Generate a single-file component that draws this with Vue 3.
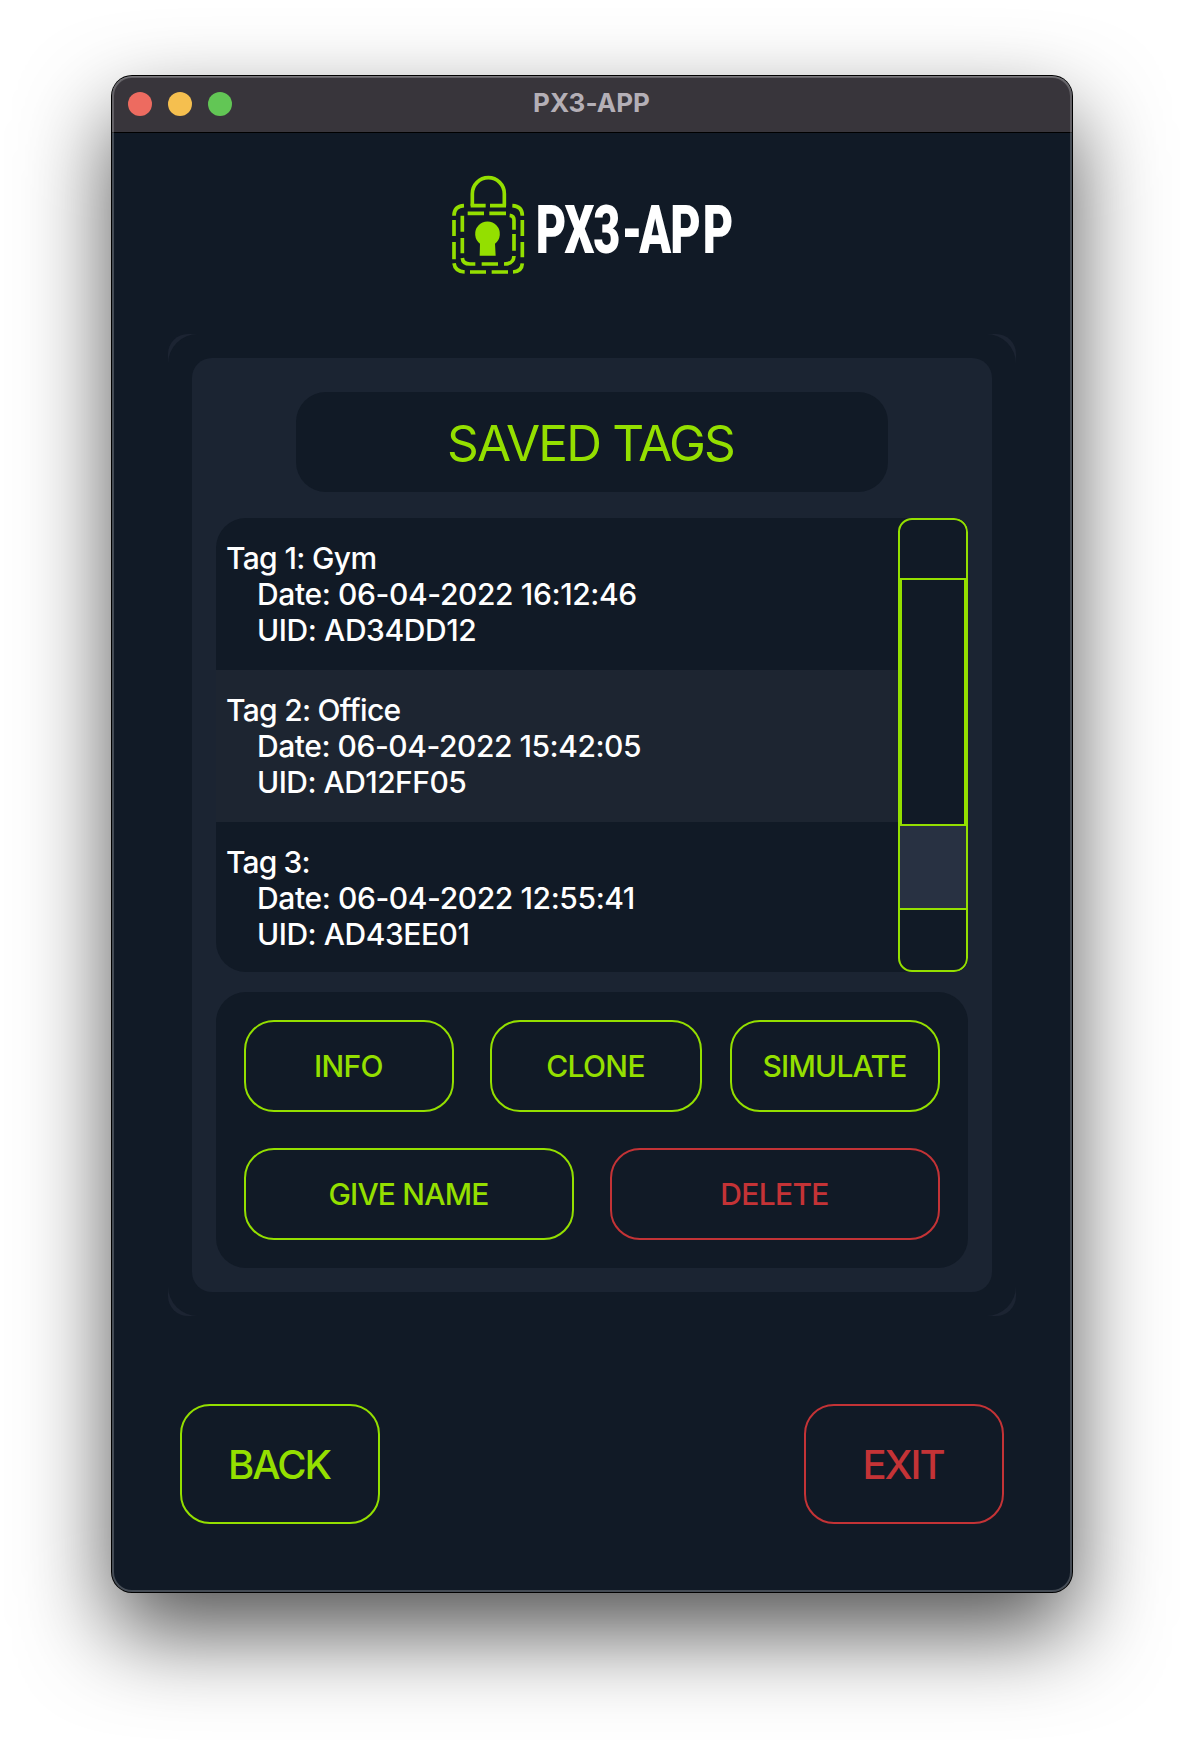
<script setup>
const tags = [
  {
    name: { text: 'Tag 1: Gym', track: -0.65 },
    date: { text: 'Date: 06-04-2022 16:12:46', track: -0.38 },
    uid: { text: 'UID: AD34DD12', track: -0.42 },
  },
  {
    name: { text: 'Tag 2: Office', track: -0.72 },
    date: { text: 'Date: 06-04-2022 15:42:05', track: -0.46 },
    uid: { text: 'UID: AD12FF05', track: -0.54 },
  },
  {
    name: { text: 'Tag 3:', track: -0.85 },
    date: { text: 'Date: 06-04-2022 12:55:41', track: -0.4 },
    uid: { text: 'UID: AD43EE01', track: -0.47 },
  },
]
const spacing = (line) => ({ letterSpacing: line.track + 'px' })
</script>

<template>
  <div class="desktop">
    <main class="window">
      <header class="titlebar">
        <div class="lights">
          <i class="light close"></i>
          <i class="light minimise"></i>
          <i class="light maximise"></i>
        </div>
        <span class="title">PX3-APP</span>
      </header>

      <section class="body">
        <svg class="logo" viewBox="0 0 960 390" width="320" height="130">
          <g fill="none" stroke="#94df00" stroke-width="11">
            <!-- shackle -->
            <path d="M127 137V101a48 48 0 0 1 96 0V137" />
            <!-- outer dashed body -->
            <path d="M122 137H167M180 137H228" />
            <path d="M72 167C72 148 83 138 102 137M247 137C266 138 277 148 277 167" />
            <path d="M72 180V228M72 246V298M277 180V228M277 246V292" />
            <path d="M72 310C74 326 84 335 104 336M249 336C266 335 276 326 277 310" />
            <path d="M120 336H168M185 336H234" />
            <!-- inner dashed body -->
            <path d="M113 160H162M178 160H228" />
            <path d="M97 167V215M97 234V280M239 166C248 167 252 171 252 180V209M252 222V272" />
            <path d="M97 294C98 306 106 312 120 312H136M155 312H204M222 312C242 312 251 305 252 288" />
          </g>
          <path fill="#94df00" d="M150 251A37 37 0 1 1 195 251L197 287H149Z" />
          <g transform="translate(0 278) scale(.7 1)">
            <text class="wordmark" y="0" x="453 576 700 821 897 1030 1169">PX3-APP</text>
          </g>
        </svg>

        <div class="frame">
          <div class="frame-mask">
            <div class="panel">
              <h1 class="heading"><span>SAVED TAGS</span></h1>

              <div class="list">
                <ul class="rows">
                  <li v-for="tag in tags" :key="tag.name.text" class="row">
                    <div :style="spacing(tag.name)">{{ tag.name.text }}</div>
                    <div class="detail" :style="spacing(tag.date)">{{ tag.date.text }}</div>
                    <div class="detail" :style="spacing(tag.uid)">{{ tag.uid.text }}</div>
                  </li>
                </ul>
                <div class="scrollbar">
                  <div class="step up"></div>
                  <div class="handle"></div>
                  <div class="track"></div>
                  <div class="step down"></div>
                </div>
              </div>

              <div class="actions">
                <div class="action-row">
                  <button class="btn info">INFO</button>
                  <button class="btn clone">CLONE</button>
                  <button class="btn simulate">SIMULATE</button>
                </div>
                <div class="action-row">
                  <button class="btn wide name">GIVE NAME</button>
                  <button class="btn wide danger">DELETE</button>
                </div>
              </div>
            </div>
          </div>
        </div>

        <footer class="footer">
          <button class="btn big">BACK</button>
          <button class="btn big danger">EXIT</button>
        </footer>
      </section>
    </main>
  </div>
</template>

<style>
body {
  background: #fff;
}
</style>

<style scoped>
* {
  box-sizing: border-box;
}
.desktop {
  width: 1184px;
  height: 1740px;
  padding: 76px 112px;
  overflow: hidden;
  font-family: Inter, 'Liberation Sans', sans-serif;
}
.window {
  position: relative;
  width: 960px;
  height: 1516px;
  border-radius: 20px;
  background: #111a26;
  box-shadow: 0 0 0 1px #000, 0 40px 90px rgba(0, 0, 0, 0.68);
}
.window::after {
  content: '';
  position: absolute;
  inset: 0;
  border-radius: 20px;
  box-shadow: inset 0 1px 0 rgba(255, 255, 255, 0.15), inset 0 0 0 2px rgba(255, 255, 255, 0.22);
  pointer-events: none;
}
.titlebar {
  display: grid;
  grid-template-columns: 1fr auto 1fr;
  align-items: center;
  height: 57px;
  padding-left: 16px;
  border-bottom: 1px solid #000;
  border-radius: 20px 20px 0 0;
  background: #38353b;
}
.lights {
  display: flex;
  gap: 16px;
}
.light {
  width: 24px;
  height: 24px;
  border-radius: 50%;
}
.close {
  background: #ed6b60;
}
.minimise {
  background: #f5bf4f;
}
.maximise {
  background: #62c655;
}
.title {
  margin-left: -17px;
  padding-bottom: 3px;
  color: #b4afb6;
  font-size: 26px;
  font-weight: 670;
  letter-spacing: 0.05px;
}
.body {
  display: flex;
  flex-direction: column;
  align-items: center;
  padding-top: 27px;
}
.logo {
  display: block;
  margin-left: -4px;
}
.wordmark {
  fill: #fff;
  font-family: Roboto, sans-serif;
  font-size: 201px;
  font-weight: 900;
}
.frame {
  width: 848px;
  height: 982px;
  margin-top: 44px;
  border-radius: 20px;
  background: #1c2432;
}
.frame-mask {
  height: 100%;
  padding: 24px;
  border-radius: 30px;
  background: #111a26;
}
.panel {
  display: flex;
  flex-direction: column;
  align-items: center;
  height: 934px;
  padding: 34px 24px 24px;
  border-radius: 20px;
  background: #1b2432;
}
.heading {
  display: flex;
  align-items: center;
  justify-content: center;
  width: 592px;
  height: 100px;
  margin: 0 0 26px;
  padding: 2px 3px 0 0;
  border-radius: 30px;
  background: #111a26;
  color: #94df00;
  font-size: 49.5px;
  font-weight: 430;
  letter-spacing: -1.8px;
}
.list {
  display: flex;
  width: 752px;
  height: 454px;
  border-radius: 30px 14px 14px 30px;
  background: #111a26;
  overflow: hidden;
}
.rows {
  flex: 1;
  margin: 0;
  padding: 0;
  list-style: none;
}
.row {
  height: 152px;
  padding: 22px 0 0 10px;
  color: #fff;
  font-size: 30px;
  font-weight: 450;
  line-height: 36px;
  white-space: nowrap;
}
.row:nth-child(even) {
  background: #1d2531;
}
.detail {
  padding-left: 31px;
}
.scrollbar {
  display: flex;
  flex-direction: column;
  width: 70px;
  border: 2px solid #94df00;
  border-radius: 14px;
  background: #111a26;
  overflow: hidden;
}
.step {
  flex: 1;
}
.handle {
  height: 248px;
  border: 2px solid #94df00;
}
.track {
  height: 84px;
  border-bottom: 2px solid #94df00;
  background: #283142;
}
.down {
  flex: 0 0 60px;
}
.actions {
  display: flex;
  flex-direction: column;
  gap: 36px;
  width: 752px;
  height: 276px;
  margin-top: 20px;
  padding: 28px;
  border-radius: 30px;
  background: #111a26;
}
.action-row {
  display: flex;
  justify-content: space-between;
}
.btn {
  width: 210px;
  height: 92px;
  padding: 0 1px 0 0;
  border: 2px solid #94df00;
  border-radius: 30px;
  background: transparent;
  color: #94df00;
  font-family: inherit;
  font-size: 30px;
  font-weight: 450;
  letter-spacing: -0.65px;
}
.clone {
  width: 212px;
  margin-left: 8px;
}
.simulate,
.name {
  letter-spacing: -0.8px;
}
.wide {
  width: 330px;
}
.danger {
  border-color: #c43336;
  color: #c43336;
}
.footer {
  display: flex;
  justify-content: space-between;
  width: 824px;
  margin-top: 88px;
}
.big {
  width: 200px;
  height: 120px;
  padding-right: 2px;
  font-size: 40px;
  letter-spacing: -2px;
}
</style>
